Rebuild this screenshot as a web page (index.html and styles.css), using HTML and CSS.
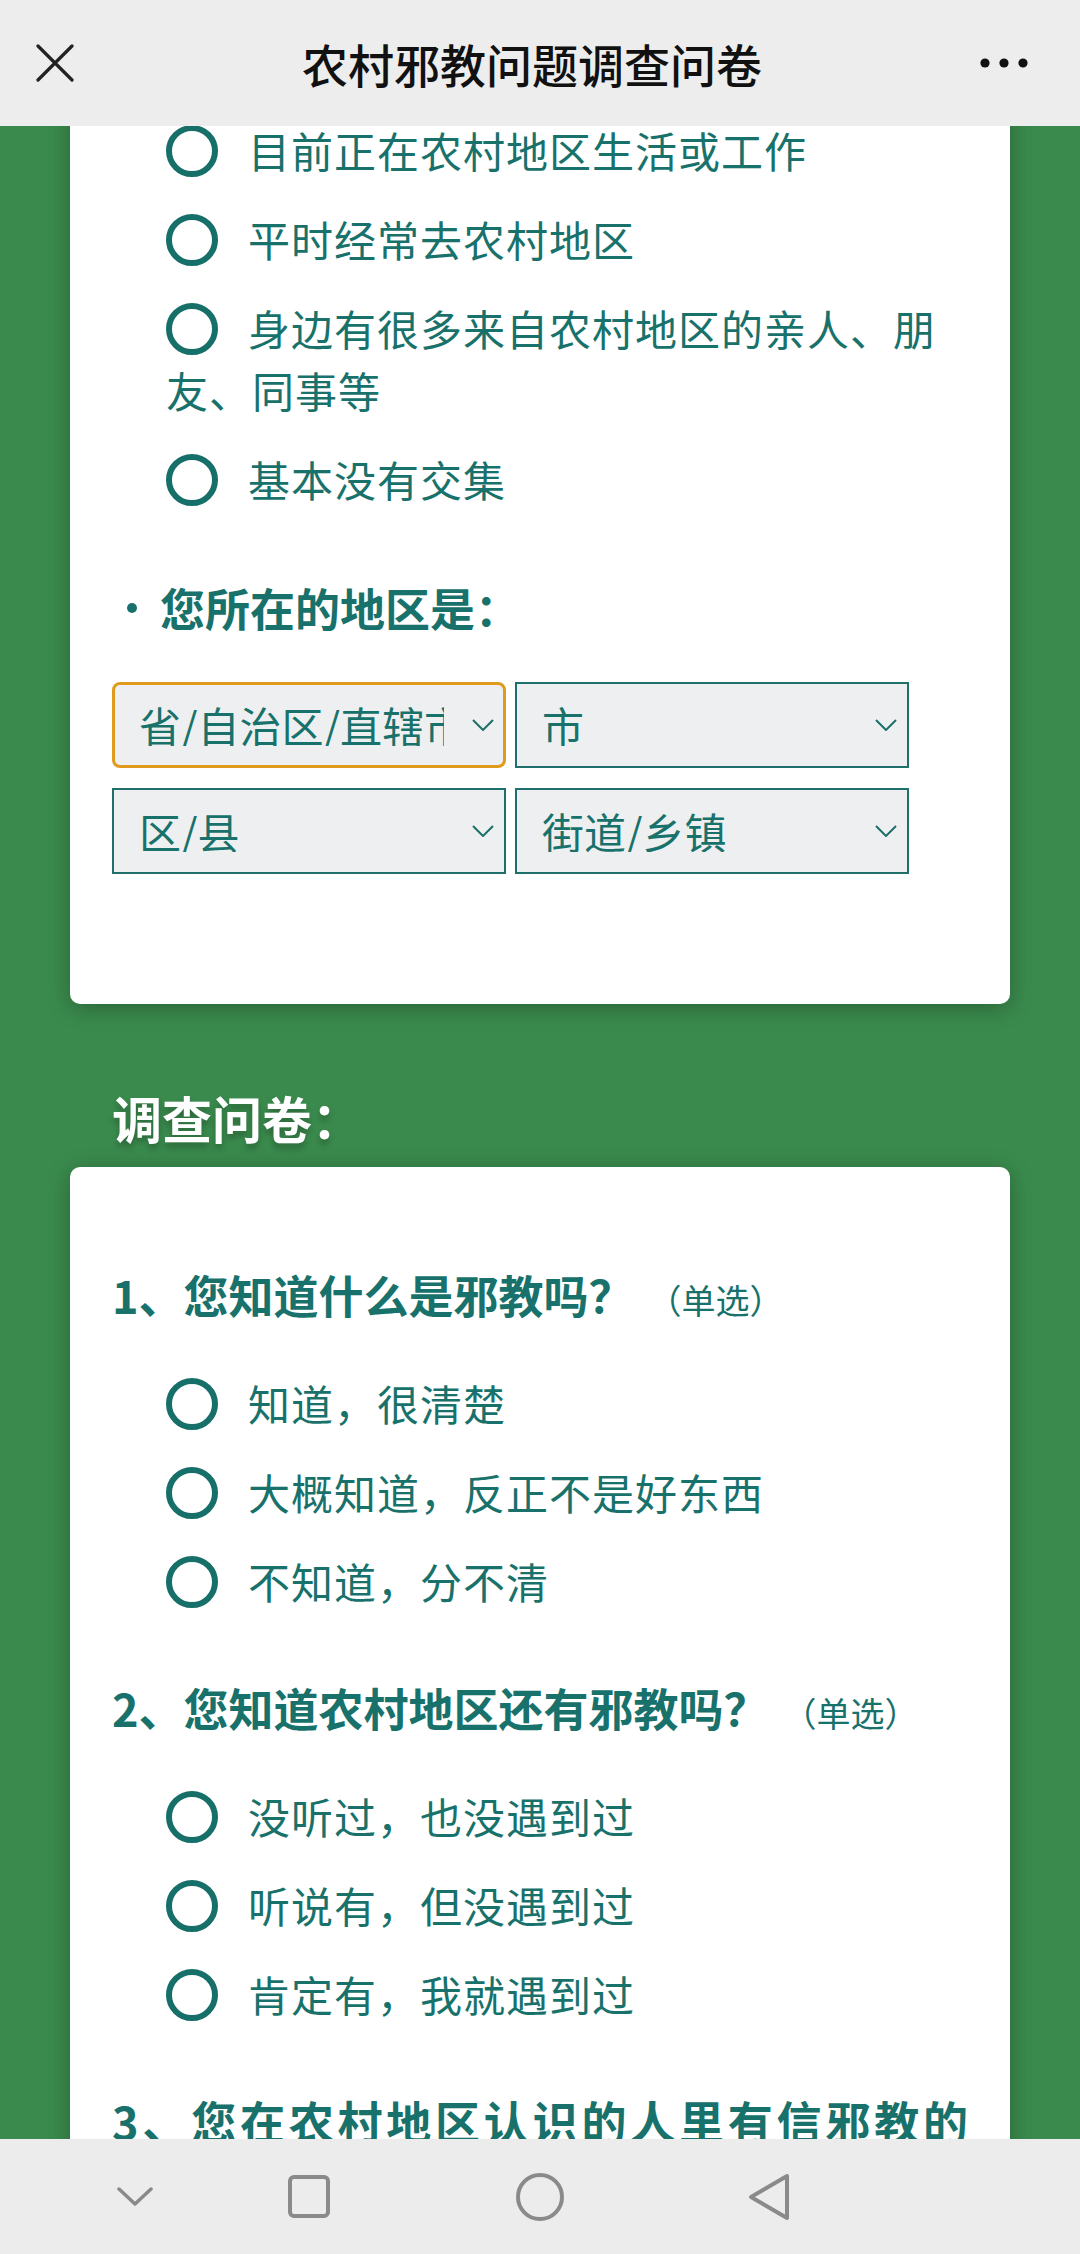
FILE: index.html
```html
<!DOCTYPE html>
<html lang="zh-CN">
<head>
  <meta charset="UTF-8" />
  <meta name="viewport" content="width=device-width, initial-scale=1.0" />
  <title>农村邪教问题调查问卷</title>
  <link rel="stylesheet" href="styles.css">
</head>
<body>
  <div class="top-bar">
    <svg class="close-icon" width="38" height="38" viewBox="0 0 38 38">
      <path d="M2 2 L36 36 M36 2 L2 36" stroke="#222" stroke-width="3.2" stroke-linecap="round" fill="none"/>
    </svg>
    <div class="title">农村邪教问题调查问卷</div>
    <svg class="more-icon" width="48" height="12" viewBox="0 0 48 12">
      <circle cx="5" cy="6" r="4.6" fill="#111"/>
      <circle cx="24" cy="6" r="4.6" fill="#111"/>
      <circle cx="43" cy="6" r="4.6" fill="#111"/>
    </svg>
  </div>

  <div class="page">
    <div class="card card-first">
      <div class="options">
        <div class="option"><span class="radio"></span>目前正在农村地区生活或工作</div>
        <div class="option"><span class="radio"></span>平时经常去农村地区</div>
        <div class="option"><span class="radio"></span>身边有很多来自农村地区的亲人、朋友、同事等</div>
        <div class="option"><span class="radio"></span>基本没有交集</div>
      </div>

      <div class="field-title"><span class="dot"></span>您所在的地区是：</div>
      <div class="region">
        <div class="picker focused">
          <span class="picker-text">省/自治区/直辖市</span>
          <svg class="arrow" width="22" height="12" viewBox="0 0 22 12"><path d="M1 1 L11 11 L21 1" stroke="#1d6f6a" stroke-width="2" fill="none"/></svg>
        </div>
        <div class="picker">
          <span class="picker-text">市</span>
          <svg class="arrow" width="22" height="12" viewBox="0 0 22 12"><path d="M1 1 L11 11 L21 1" stroke="#1d6f6a" stroke-width="2" fill="none"/></svg>
        </div>
        <div class="picker">
          <span class="picker-text">区/县</span>
          <svg class="arrow" width="22" height="12" viewBox="0 0 22 12"><path d="M1 1 L11 11 L21 1" stroke="#1d6f6a" stroke-width="2" fill="none"/></svg>
        </div>
        <div class="picker">
          <span class="picker-text">街道/乡镇</span>
          <svg class="arrow" width="22" height="12" viewBox="0 0 22 12"><path d="M1 1 L11 11 L21 1" stroke="#1d6f6a" stroke-width="2" fill="none"/></svg>
        </div>
      </div>
    </div>

    <div class="section-title">调查问卷：</div>

    <div class="card card-survey">
      <div class="question">1、您知道什么是邪教吗？<span class="tag">（单选）</span></div>
      <div class="options">
        <div class="option"><span class="radio"></span>知道，很清楚</div>
        <div class="option"><span class="radio"></span>大概知道，反正不是好东西</div>
        <div class="option"><span class="radio"></span>不知道，分不清</div>
      </div>

      <div class="question">2、您知道农村地区还有邪教吗？<span class="tag">（单选）</span></div>
      <div class="options">
        <div class="option"><span class="radio"></span>没听过，也没遇到过</div>
        <div class="option"><span class="radio"></span>听说有，但没遇到过</div>
        <div class="option"><span class="radio"></span>肯定有，我就遇到过</div>
      </div>

      <div class="question">3、您在农村地区认识的人里有信邪教的吗？<span class="tag">（单选）</span></div>
      <div class="options">
        <div class="option"><span class="radio"></span>没有</div>
        <div class="option"><span class="radio"></span>有</div>
        <div class="option"><span class="radio"></span>不清楚</div>
      </div>
    </div>
  </div>

  <div class="nav-bar">
    <svg class="nav-down" width="36" height="19" viewBox="0 0 36 19"><path d="M2 2 L18 17 L34 2" stroke="#8a8a8a" stroke-width="3.5" stroke-linecap="round" stroke-linejoin="round" fill="none"/></svg>
    <svg class="nav-square" width="42" height="43" viewBox="0 0 42 43"><rect x="2" y="2" width="38" height="39" rx="4" stroke="#8a8a8a" stroke-width="4" fill="none"/></svg>
    <svg class="nav-home" width="48" height="48" viewBox="0 0 48 48"><ellipse cx="24" cy="24" rx="22" ry="22" stroke="#8a8a8a" stroke-width="4" fill="none"/></svg>
    <svg class="nav-back" width="42" height="48" viewBox="0 0 42 48"><path d="M39 3 L3 24 L39 45 Z" stroke="#8a8a8a" stroke-width="4" stroke-linejoin="round" fill="none"/></svg>
  </div>
</body>
</html>
```

FILE: styles.css
```css
html, body {
  height: 100%;
  overflow: hidden;
}

body {
  margin: 0;
  padding: 0;
  font-family: 'Noto Sans CJK SC', 'Noto Sans', sans-serif;
  background-color: #3a8a4d;
  color: #18726b;
}

/* barra superior */
.top-bar {
  position: fixed;
  top: 0;
  left: 0;
  right: 0;
  height: 126px;
  z-index: 10;
  background-color: #ededed;
  display: grid;
  grid-template-columns: 1fr auto 1fr;
  align-items: center;
  padding: 0 52px 0 36px;
}

.top-bar .title {
  font-size: 46px;
  font-weight: 500;
  color: #111;
}

.more-icon {
  justify-self: end;
}

.page {
  padding: 0 70px;
}

.card {
  background-color: #fff;
  border-radius: 10px;
  box-shadow: 0 4px 22px rgba(0, 0, 0, 0.28);
  padding: 0 42px;
}

.card-first {
  padding-top: 119px;
  padding-bottom: 130px;
  border-radius: 0 0 10px 10px;
}

.card-survey {
  padding-top: 97px;
  padding-bottom: 200px;
}

.options {
  display: flex;
  flex-direction: column;
  gap: 27px;
  padding-left: 54px;
}

.option {
  font-size: 42px;
  line-height: 62px;
  letter-spacing: 1px;
}

.radio {
  display: inline-block;
  width: 52px;
  height: 52px;
  box-sizing: border-box;
  border: 6px solid #166f68;
  border-radius: 50%;
  vertical-align: top;
  margin: 6px 30px 0 0;
}

.field-title {
  margin-top: 67px;
  display: flex;
  align-items: center;
  padding-left: 15px;
  font-size: 45px;
  font-weight: bold;
  line-height: 62px;
}

.field-title .dot {
  width: 10px;
  height: 10px;
  border-radius: 50%;
  background-color: #18726b;
  margin-right: 23px;
}

.region {
  margin-top: 43px;
  display: grid;
  grid-template-columns: 394px 394px;
  column-gap: 9px;
  row-gap: 20px;
}

.picker {
  height: 86px;
  box-sizing: border-box;
  border: 2px solid #1f6f6b;
  background-color: #eeeff0;
  display: flex;
  align-items: center;
  padding: 0 10px 0 25px;
  font-size: 42px;
  line-height: 1;
}

.picker.focused {
  border: 3px solid #e09b1e;
  border-radius: 8px;
  padding: 0 9px 0 24px;
}

.picker-text {
  flex: 1;
  overflow: hidden;
  white-space: nowrap;
}

.picker .arrow {
  flex-shrink: 0;
  margin-left: 28px;
}

.section-title {
  margin: 82px 0 19px 42px;
  font-size: 50px;
  font-weight: bold;
  line-height: 62px;
  color: #fff;
  text-shadow: 0 5px 6px rgba(0, 0, 0, 0.25);
}

.question {
  font-size: 45px;
  font-weight: bold;
  line-height: 62px;
  text-align: justify;
}

.question .tag {
  font-size: 34px;
  font-weight: normal;
  line-height: 1;
  margin-left: 14px;
}

.question + .options {
  margin-top: 46px;
}

.options + .question {
  margin-top: 65px;
}

/* barra de navegação */
.nav-bar {
  position: fixed;
  left: 0;
  right: 0;
  bottom: 0;
  height: 115px;
  z-index: 10;
  background-color: #ececec;
  display: flex;
  align-items: center;
  padding-left: 117px;
}

.nav-square {
  margin-left: 135px;
}

.nav-home {
  margin-left: 186px;
}

.nav-back {
  margin-left: 184px;
}
```
